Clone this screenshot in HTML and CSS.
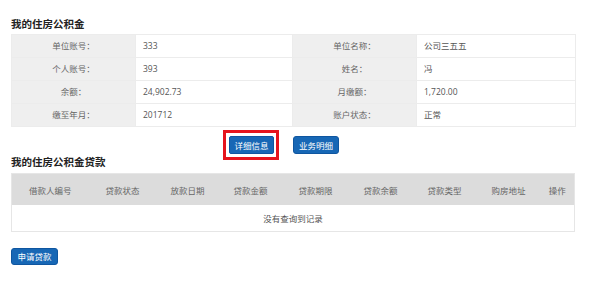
FILE: index.html
```html
<!DOCTYPE html>
<html lang="zh-CN">
<head>
<meta charset="utf-8">
<link rel="stylesheet" href="styles.css">
</head>
<body>
<div class="page">
  <h2 class="title">我的住房公积金</h2>
  <table class="info">
    <colgroup><col class="c-label"><col class="c-val"><col class="c-label"><col class="c-val2"></colgroup>
    <tr><td class="lbl">单位账号：</td><td class="val">333</td><td class="lbl">单位名称：</td><td class="val">公司三五五</td></tr>
    <tr><td class="lbl">个人账号：</td><td class="val">393</td><td class="lbl">姓名：</td><td class="val">冯</td></tr>
    <tr><td class="lbl">余额：</td><td class="val">24,902.73</td><td class="lbl">月缴额：</td><td class="val">1,720.00</td></tr>
    <tr><td class="lbl">缴至年月：</td><td class="val">201712</td><td class="lbl">账户状态：</td><td class="val">正常</td></tr>
  </table>
  <div class="actions">
    <span class="highlight-frame"><button class="btn btn-detail">详细信息</button></span>
    <button class="btn btn-biz">业务明细</button>
  </div>
  <h2 class="title title-loan">我的住房公积金贷款</h2>
  <table class="loan">
    <colgroup>
      <col style="width:77px"><col style="width:68px"><col style="width:62px"><col style="width:64px"><col style="width:66px"><col style="width:64px"><col style="width:64px"><col style="width:64px"><col style="width:34px">
    </colgroup>
    <thead>
      <tr><th>借款人编号</th><th>贷款状态</th><th>放款日期</th><th>贷款金额</th><th>贷款期限</th><th>贷款余额</th><th>贷款类型</th><th>购房地址</th><th>操作</th></tr>
    </thead>
    <tbody>
      <tr><td colspan="9" class="empty">没有查询到记录</td></tr>
    </tbody>
  </table>
  <div class="apply-row">
    <button class="btn btn-apply">申请贷款</button>
  </div>
</div>
</body>
</html>
```

FILE: styles.css
```css
html, body {
  margin: 0;
  padding: 0;
  background: #ffffff;
}

body {
  font-family: "Open Sans", "Noto Sans CJK SC", sans-serif;
  color: #555;
}

.page {
  width: 563px;
  padding: 17px 0 0 11px;
}

.title {
  margin: 0;
  font-size: 10.5px;
  line-height: 14px;
  font-weight: bold;
  color: #222;
  font-family: "Noto Sans CJK SC", sans-serif;
}

.info {
  margin-top: 3px;
  width: 563px;
  border-collapse: collapse;
  table-layout: fixed;
  border: 1px solid #e6e6e6;
}

.c-label { width: 124px; }
.c-val { width: 157px; }
.c-val2 { width: 159px; }

.info td {
  height: 22px;
  padding: 0;
  border: 1px solid #ececec;
  font-size: 8.5px;
  line-height: 12px;
}

.info .lbl {
  background: #efefef;
  color: #666;
  text-align: center;
}

.info .val {
  background: #fff;
  color: #555;
  padding-left: 7px;
}

.actions {
  display: flex;
  align-items: center;
  gap: 19px;
  padding-left: 218px;
  margin-top: 9px;
  margin-bottom: 1px;
}

.highlight-frame {
  display: flex;
  border: 3px solid #e5141d;
  padding: 3px 2px 3px 3px;
  margin: -6px -5px -6px -6px;
}

.btn {
  font-family: "Noto Sans CJK SC", sans-serif;
  font-size: 8.5px;
  line-height: 12px;
  color: #fff;
  background: #1767b5;
  border: 1px solid #0f56a0;
  border-radius: 3px;
  padding: 0;
  height: 18px;
  cursor: pointer;
}

.btn-detail { width: 45px; border-radius: 2px; }
.btn-biz { width: 46px; }

.loan {
  margin-top: 4px;
  width: 563px;
  border-collapse: collapse;
  table-layout: fixed;
  border: 1px solid #e6e6e6;
}

.loan th {
  height: 31px;
  padding: 0;
  background: #dcdcdc;
  color: #666;
  font-weight: normal;
  font-size: 8.5px;
  text-align: center;
}

.loan td.empty {
  height: 26px;
  padding: 0;
  text-align: center;
  font-size: 8.5px;
  color: #555;
  background: #fff;
}

.apply-row {
  margin-top: 11px;
}

.btn-apply {
  width: 47px;
  height: 17px;
}
```
